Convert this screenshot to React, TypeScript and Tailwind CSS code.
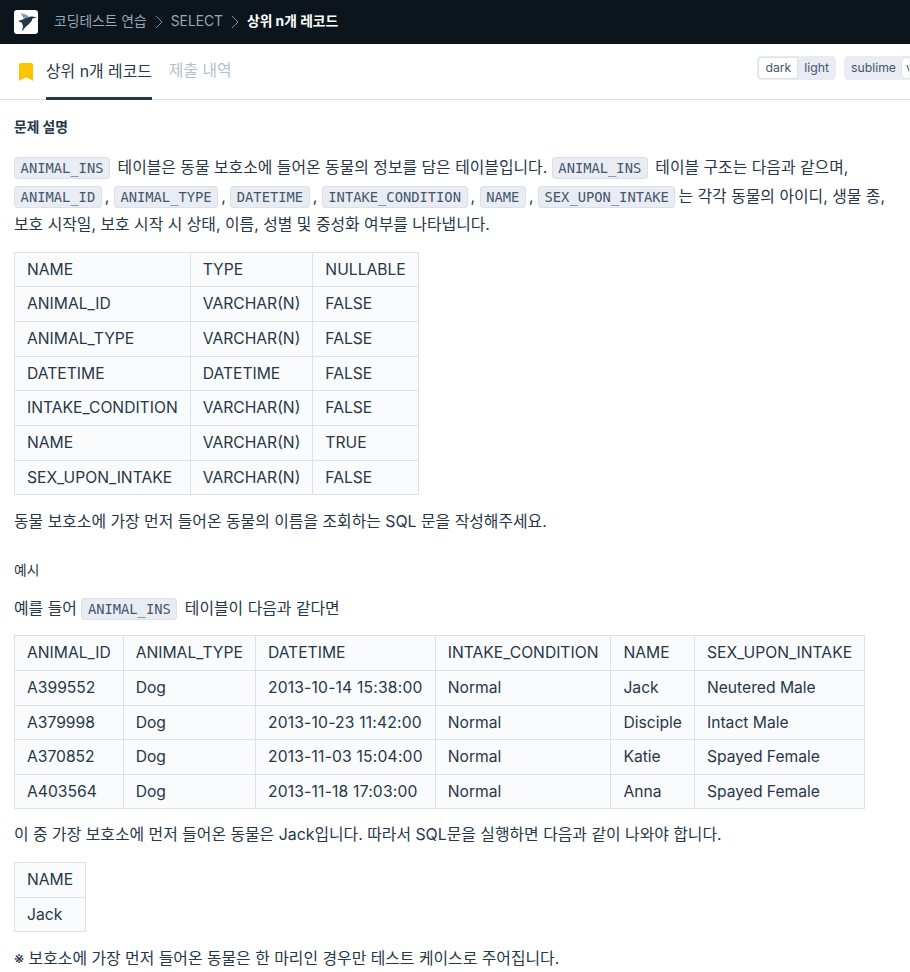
const sans = "font-['Inter','Noto_Sans_CJK_KR',sans-serif]";

function Code({ children }: { children: string }) {
  return (
    <code className="mr-[3px] rounded border border-[#d7e2eb] bg-[#e9ecf3] px-[5.6px] py-[2px] font-['DejaVu_Sans_Mono',monospace] text-[13.78px] text-[#44576c]">
      {children}
    </code>
  );
}

function Table({ rows, className = "" }: { rows: string[][]; className?: string }) {
  return (
    <table className={`border-collapse text-[15.65px] leading-[23.625px] text-[#263747] ${className}`}>
      <tbody>
        {rows.map((r, i) => (
          <tr key={i}>
            {r.map((c, j) => (
              <td key={j} className="whitespace-nowrap border border-[#d7e2eb] bg-[#fafbfd] px-3 py-[5px]">
                {/^\d{4}-/.test(c) ? <span className="tracking-[0.2px]">{c}</span> : c}
              </td>
            ))}
          </tr>
        ))}
      </tbody>
    </table>
  );
}

const structure = [
  ["NAME", "TYPE", "NULLABLE"],
  ["ANIMAL_ID", "VARCHAR(N)", "FALSE"],
  ["ANIMAL_TYPE", "VARCHAR(N)", "FALSE"],
  ["DATETIME", "DATETIME", "FALSE"],
  ["INTAKE_CONDITION", "VARCHAR(N)", "FALSE"],
  ["NAME", "VARCHAR(N)", "TRUE"],
  ["SEX_UPON_INTAKE", "VARCHAR(N)", "FALSE"],
];

const sample = [
  ["ANIMAL_ID", "ANIMAL_TYPE", "DATETIME", "INTAKE_CONDITION", "NAME", "SEX_UPON_INTAKE"],
  ["A399552", "Dog", "2013-10-14 15:38:00", "Normal", "Jack", "Neutered Male"],
  ["A379998", "Dog", "2013-10-23 11:42:00", "Normal", "Disciple", "Intact Male"],
  ["A370852", "Dog", "2013-11-03 15:04:00", "Normal", "Katie", "Spayed Female"],
  ["A403564", "Dog", "2013-11-18 17:03:00", "Normal", "Anna", "Spayed Female"],
];

function Chevron() {
  return (
    <svg width="8" height="14" viewBox="0 0 8 14" fill="none" stroke="#78909c" strokeWidth="1">
      <path d="M1 1l6 6-6 6" />
    </svg>
  );
}

export default function App() {
  return (
    <div className={`h-[972px] w-[910px] overflow-hidden bg-white ${sans}`}>
      <header className="flex h-11 items-center bg-[#0c151c] pb-[1px] pl-[14px] text-[13.8px]">
        <div className="h-6 w-6 rounded-[3px] bg-white">
          <svg width="24" height="24" viewBox="0 0 24 24">
            <path fill="#8f9bab" d="M6.5 3.2l5 1 3.2 2-1 5-3.5-1.5-1.5-3z" />
            <path fill="#263747" d="M4 11l6-2 4-1.6 2.500-1 2 .2 4.600 1-4.600.9-1 2.800-3 3.200-3 2.500-3.500 4.500 1-5.500-1.200-3.200z" />
          </svg>
        </div>
        <span className="ml-4 text-[#98a8b9]">코딩테스트 연습</span>
        <span className="mx-2"><Chevron /></span>
        <span className="text-[#98a8b9]">SELECT</span>
        <span className="mx-2"><Chevron /></span>
        <span className="font-bold text-white">상위 n개 레코드</span>
      </header>

      <div className="flex h-[56px] items-start border-b border-[#d7dfe0]">
        <svg className="ml-[19px] mt-[19px]" width="14" height="18" viewBox="0 0 14 18">
          <path fill="#ffc400" d="M1.5 0h11A1.5 1.5 0 0 1 14 1.5V18c-2.4-1-4.4-3.6-7-3.6S2.400 17 0 18V1.500A1.500 1.500 0 0 1 1.500 0z" />
        </svg>
        <div className="ml-[13px] flex h-[56px] items-center border-b-[3px] border-[#263747] pt-[3px] text-[15.87px] text-[#263747]">
          상위 n개 레코드
        </div>
        <div className="ml-[17px] flex h-[54px] items-center text-[15.87px] text-[#b2c0cc]">제출 내역</div>
        <div className="ml-auto mt-3 flex shrink-0 text-[12.25px] text-[#44576c]">
          <div className="flex h-6 overflow-hidden rounded border border-[#e9ecf3] bg-[#e9ecf3] leading-[22px]">
            <span className="rounded-l border border-[#d7e2eb] bg-white px-[6px] leading-[20px]">dark</span>
            <span className="px-[6px]">light</span>
          </div>
          <div className="ml-2 flex h-6 w-[66px] overflow-hidden rounded-l border border-[#e9ecf3] bg-[#e9ecf3] leading-[22px]">
            <span className="pl-[6px] pr-[5px]">sublime</span>
            <span className="flex-1 whitespace-nowrap rounded-l border border-[#d7e2eb] bg-white pl-[4px] leading-[20px]">vim</span>
          </div>
        </div>
      </div>

      <main className="px-[14px] pt-[15px] text-[15.87px] leading-[28.6px] text-[#263747]">
        <h6 className="text-[13.78px] font-bold leading-[24px]">문제 설명</h6>
        <p className="mt-[15px] w-[882px]">
          <Code>ANIMAL_INS</Code> 테이블은 동물 보호소에 들어온 동물의 정보를 담은 테이블입니다. <Code>ANIMAL_INS</Code> 테이블 구조는 다음과 같으며, <Code>ANIMAL_ID</Code>, <Code>ANIMAL_TYPE</Code>, <Code>DATETIME</Code>, <Code>INTAKE_CONDITION</Code>, <Code>NAME</Code>, <Code>SEX_UPON_INTAKE</Code>는 각각 동물의 아이디, 생물 종, 보호 시작일, 보호 시작 시 상태, 이름, 성별 및 중성화 여부를 나타냅니다.
        </p>
        <Table rows={structure} className="mt-3" />
        <p className="mt-[13px]">동물 보호소에 가장 먼저 들어온 동물의 이름을 조회하는 SQL 문을 작성해주세요.</p>
        <h5 className="mt-[21px] text-[13.78px] leading-[24px]">예시</h5>
        <p className="mt-[13px]">
          예를 들어 <Code>ANIMAL_INS</Code> 테이블이 다음과 같다면
        </p>
        <Table rows={sample} className="mt-3" />
        <p className="mt-3">이 중 가장 보호소에 먼저 들어온 동물은 Jack입니다. 따라서 SQL문을 실행하면 다음과 같이 나와야 합니다.</p>
        <Table rows={[["NAME"], ["Jack"]]} className="mt-3" />
        <p className="mt-[13px]">※ 보호소에 가장 먼저 들어온 동물은 한 마리인 경우만 테스트 케이스로 주어집니다.</p>
      </main>
    </div>
  );
}
